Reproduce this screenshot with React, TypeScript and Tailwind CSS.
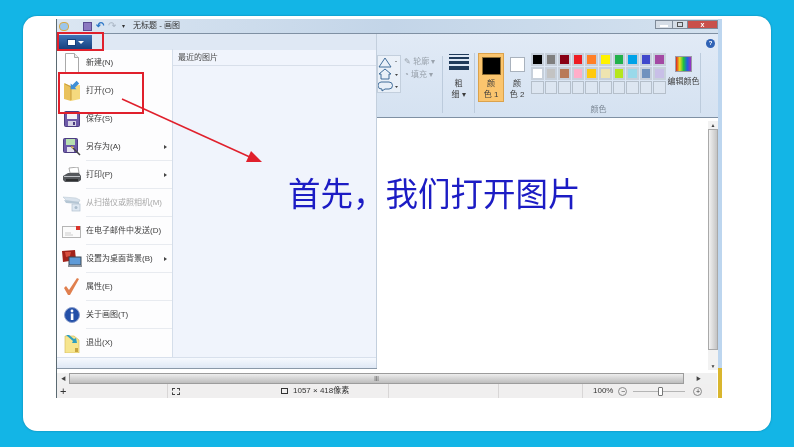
import type { ReactNode } from "react";

const FONT = "font-['Liberation_Sans','Noto_Sans_CJK_SC',sans-serif]";

const PALETTE = [
  "#000000", "#7f7f7f", "#880015", "#ed1c24", "#ff7f27", "#fff200", "#22b14c", "#00a2e8", "#3f48cc", "#a349a4",
  "#ffffff", "#c3c3c3", "#b97a57", "#ffaec9", "#ffc90e", "#efe4b0", "#b5e61d", "#99d9ea", "#7092be", "#c8bfe7",
];

function DocIcon() {
  return (
    <svg width="16" height="20" viewBox="0 0 16 20">
      <path d="M1.5 .5h9l4 4v15h-13z" fill="#fff" stroke="#a9a9a9" />
      <path d="M10.5 .5v4h4" fill="#eee" stroke="#a9a9a9" />
    </svg>
  );
}

function OpenIcon() {
  return (
    <svg width="18" height="22" viewBox="0 0 18 22">
      <path d="M1 3l7 3v15l-7-2z" fill="#e9c25c" />
      <path d="M8 6l9-1v14l-9 2z" fill="#f5d97e" />
      <path d="M2 4l6 3v13" fill="none" stroke="#c79c3a" />
      <path d="M16 1l-5 5-2-2v7h7l-2-2 5-5z" fill="#3f8fd6" transform="scale(.85)" />
    </svg>
  );
}

function SaveIcon() {
  return (
    <svg width="16" height="16" viewBox="0 0 16 16">
      <rect x=".5" y=".5" width="15" height="15" rx="1" fill="#6d5aa8" stroke="#4b3c80" />
      <rect x="3" y="1" width="10" height="7" fill="#f2f2f8" />
      <rect x="4" y="10" width="8" height="5" fill="#d5d3e4" />
      <rect x="9" y="11" width="2" height="3" fill="#4b3c80" />
    </svg>
  );
}

function SaveAsIcon() {
  return (
    <svg width="18" height="18" viewBox="0 0 18 18">
      <rect x=".5" y=".5" width="14" height="14" rx="1" fill="#6d5aa8" stroke="#4b3c80" />
      <rect x="3" y="1" width="9" height="6" fill="#b7e0b0" />
      <rect x="4" y="9" width="7" height="5" fill="#e4e2ef" />
      <path d="M8 8l9 9" stroke="#444" strokeWidth="1.5" />
      <path d="M8 8l3 1-2 2z" fill="#e6b35a" />
    </svg>
  );
}

function PrintIcon() {
  return (
    <svg width="20" height="16" viewBox="0 0 20 16">
      <path d="M7 1l9-1 1 6H8z" fill="#fff" stroke="#888" strokeWidth=".7" />
      <path d="M1 9l5-3h11l2 3v4l-3 2H3l-2-2z" fill="#55585c" />
      <path d="M2 9.5h16" stroke="#bfc2c6" />
      <path d="M4 13h12" stroke="#222" strokeWidth="1.5" />
    </svg>
  );
}

function ScanIcon() {
  return (
    <svg width="18" height="17" viewBox="0 0 18 17" opacity=".65">
      <path d="M0 2l13 1 4 2-1 2-12-1z" fill="#c7d6e4" stroke="#9aaebf" strokeWidth=".6" />
      <path d="M1 5l15 2v2L3 8z" fill="#8fa9bf" />
      <rect x="9" y="9" width="8" height="7" fill="#cfdeec" stroke="#8ba2b8" strokeWidth=".7" />
      <circle cx="13" cy="12.5" r="1.5" fill="#7f9ab2" />
    </svg>
  );
}

function MailIcon() {
  return (
    <svg width="20" height="13" viewBox="0 0 20 13">
      <rect x=".5" y="1.5" width="18" height="11" fill="#fbfbfb" stroke="#b5b5b5" />
      <path d="M3 8h6M3 10h8" stroke="#ccc" />
      <rect x="14" y="1" width="4" height="4" fill="#d9332b" />
    </svg>
  );
}

function DesktopIcon() {
  return (
    <svg width="20" height="18" viewBox="0 0 20 18">
      <path d="M0 1l13-1 1 10L1 12z" fill="#a3231b" />
      <path d="M3 2l6 0-1 4-4 1z" fill="#d8503f" />
      <rect x="7" y="7" width="12" height="8" fill="#5f9bd8" stroke="#3d4650" />
      <path d="M6 15h14v2H6z" fill="#8d9299" />
    </svg>
  );
}

function CheckIcon() {
  return (
    <svg width="17" height="18" viewBox="0 0 17 18">
      <path d="M1 10l2-2 3 4 8-12 2 1-9 16h-2z" fill="#e07f4e" />
    </svg>
  );
}

function InfoIcon() {
  return (
    <svg width="16" height="16" viewBox="0 0 16 16">
      <circle cx="8" cy="8" r="7.5" fill="#2450a8" stroke="#8c9fcc" />
      <circle cx="8" cy="4" r="1.4" fill="#fff" />
      <rect x="6.8" y="6.5" width="2.6" height="6.5" fill="#fff" />
    </svg>
  );
}

function ExitIcon() {
  return (
    <svg width="16" height="19" viewBox="0 0 16 19">
      <path d="M1 2h9l5 4v13H1z" fill="#f6e58e" stroke="#d8bd5f" strokeWidth=".7" />
      <path d="M2 1l7 6-1 2 5 0-1-5-2 1-5-4z" fill="#2f9fc0" />
      <rect x="11" y="14" width="3" height="4" fill="#c9a63f" />
    </svg>
  );
}

const MENU: { label: string; icon: ReactNode; more?: boolean; off?: boolean }[] = [
  { label: "新建(N)", icon: <DocIcon /> },
  { label: "打开(O)", icon: <OpenIcon /> },
  { label: "保存(S)", icon: <SaveIcon /> },
  { label: "另存为(A)", icon: <SaveAsIcon />, more: true },
  { label: "打印(P)", icon: <PrintIcon />, more: true },
  { label: "从扫描仪或照相机(M)", icon: <ScanIcon />, off: true },
  { label: "在电子邮件中发送(D)", icon: <MailIcon /> },
  { label: "设置为桌面背景(B)", icon: <DesktopIcon />, more: true },
  { label: "属性(E)", icon: <CheckIcon /> },
  { label: "关于画图(T)", icon: <InfoIcon /> },
  { label: "退出(X)", icon: <ExitIcon /> },
];

function AppMenu() {
  return (
    <div className="absolute left-[1px] top-[15px] flex h-[334px] w-[320px] flex-col border-r border-[#c3cfdd] bg-[#fdfdfe] shadow-[0_1px_0_#8a98a8]">
      <div className="flex h-[16px] items-start bg-[#dfe8f4]">
        <div className="ml-[1px] mt-[1px] flex h-[14px] w-[34px] items-center justify-center gap-[2px] bg-gradient-to-b from-[#3f74b8] to-[#16417f]">
          <span className="h-[7px] w-[9px] border border-[#16417f] bg-white" />
          <span className="border-x-[3px] border-t-[3px] border-x-transparent border-t-white" />
        </div>
      </div>
      <div className="flex min-h-0 flex-1">
        <div className="-mt-[1px] w-[116px] border-r border-[#d5deea]">
          {MENU.map((m, i) => (
            <div key={m.label} className="flex h-[28px] items-center">
              <div className="flex w-[29px] shrink-0 justify-center">{m.icon}</div>
              <div
                className={`flex h-full flex-1 items-center justify-between pr-[5px] text-[8px] ${
                  m.off ? "text-[#a8a8a8]" : "text-[#3c3c3c]"
                } ${i > 2 && i < 10 ? "border-b border-[#e8ebf0]" : ""}`}
              >
                <span className="whitespace-nowrap">{m.label}</span>
                {m.more && (
                  <span className="border-y-[2.5px] border-l-[3px] border-y-transparent border-l-[#444]" />
                )}
              </div>
            </div>
          ))}
        </div>
        <div className="flex-1 bg-[#f0f4fc]">
          <div className="flex h-[16px] items-center border-b border-[#d8dfea] pl-[5px] text-[8px] text-[#4a4a4a]">
            最近的图片
          </div>
        </div>
      </div>
      <div className="h-[11px] border-t border-[#d8e0ec] bg-gradient-to-b from-[#f6f9fe] to-[#dfe8f5]" />
    </div>
  );
}

function Ribbon() {
  return (
    <div className="relative flex h-[85px] border-y border-[#7f90a3] bg-gradient-to-b from-[#e1eaf6] to-[#d5e2f1] pl-[320px] pt-[19px]">
      <span className="absolute right-[3px] top-[5px] flex h-[9px] w-[9px] items-center justify-center rounded-full bg-[#2f62b5] text-[6px] font-bold text-white">
        ?
      </span>

      <div className="mt-[2px] flex h-[38px] w-[24px] flex-col border border-[#c3cfdd] bg-white/40">
        <svg width="22" height="36" viewBox="0 0 22 36" fill="none" stroke="#2f5f8f" strokeWidth=".9">
          <path d="M7 2l6 9H1z" />
          <path d="M7 13l6 5h-2v5H3v-5H1z" />
          <path d="M3 26h8a3 3 0 010 7H7l-3 2v-2a3 3 0 01-1-7z" />
          <path d="M18 5l1 1h-2zM17 18h3l-1.500 2zM17 30h3l-1.500 2z" fill="#444" stroke="none" />
        </svg>
      </div>

      <div className="ml-[3px] mt-[3px] flex h-[57px] w-[39px] flex-col gap-[2px] border-r border-[#bccbdc] pr-[4px] text-[8px] leading-[11px] text-[#9aa3ad]">
        <div className="whitespace-nowrap">✎ 轮廓 ▾</div>
        <div className="whitespace-nowrap">◔ 填充 ▾</div>
      </div>

      <div className="flex h-[60px] w-[32px] flex-col items-center border-r border-[#bccbdc] pt-[1px]">
        <div className="flex w-[20px] flex-col gap-[2px]">
          <span className="h-[1px] bg-[#1f3a5a]" />
          <span className="h-[2px] bg-[#1f3a5a]" />
          <span className="h-[3px] bg-[#1f3a5a]" />
          <span className="h-[4px] bg-[#1f3a5a]" />
        </div>
        <div className="mt-[8px] text-center text-[8px] leading-[11px] text-[#3c3c3c]">
          粗
          <br />
          细 ▾
        </div>
      </div>

      <div className="ml-[3px] flex h-[49px] w-[26px] flex-col items-center border border-[#dba24c] bg-[#fbc56e] pt-[3px]">
        <span className="h-[18px] w-[19px] border border-[#8a6a30] bg-black" />
        <div className="mt-[3px] text-center text-[8px] leading-[11px] text-[#3c3c3c]">
          颜
          <br />
          色 1
        </div>
      </div>

      <div className="ml-[4px] flex h-[49px] w-[18px] flex-col items-center pt-[4px]">
        <span className="h-[15px] w-[15px] border border-[#a9b2bd] bg-white" />
        <div className="mt-[6px] whitespace-nowrap text-center text-[8px] leading-[11px] text-[#3c3c3c]">
          颜
          <br />
          色 2
        </div>
      </div>

      <div className="ml-[5px] flex flex-col items-center">
        <div className="grid h-[41px] w-[135px] grid-cols-10 grid-rows-3 gap-[1px]">
          {PALETTE.map((c, i) => (
            <span key={i} className="border-[2px] border-[#c7d0db]" style={{ background: c }} />
          ))}
          {Array.from({ length: 10 }).map((_, i) => (
            <span key={i} className="border border-[#b5bfca] bg-[#dde6f1]" />
          ))}
        </div>
        <span className="mt-[10px] text-[8px] text-[#7b8794]">颜色</span>
      </div>

      <div className="ml-[1px] flex h-[60px] w-[34px] flex-col items-center border-r border-[#bccbdc] pt-[3px]">
        <span className="h-[16px] w-[17px] border border-[#9a9aa5] bg-[linear-gradient(90deg,#e02020,#e8e020,#20c040,#2060e0,#a030c0)]" />
        <span className="mt-[4px] whitespace-nowrap text-[8px] leading-[11px] text-[#3c3c3c]">编辑颜色</span>
      </div>
    </div>
  );
}

function TitleBar() {
  return (
    <div className="flex h-[14px] items-center bg-gradient-to-r from-[#dbe6f2] via-[#c3d5e8] to-[#d3e1ef]">
      <span className="ml-[2px] h-[9px] w-[10px] rounded-sm border border-[#d8a840] bg-[#9cc6ea]" />
      <span className="ml-[14px] h-[9px] w-[9px] border border-[#5a4a90] bg-[#8c78c0]" />
      <span className="ml-[4px] text-[10px] leading-none font-bold text-[#2f78c8]">↶</span>
      <span className="ml-[4px] text-[10px] leading-none text-[#aab6c4]">↷</span>
      <span className="ml-[6px] text-[6px] text-[#333]">▾</span>
      <span className="ml-[8px] whitespace-nowrap text-[8px] text-[#333]">无标题 - 画图</span>
      <div className="ml-auto mt-[-4px] flex h-[9px] items-stretch border border-[#7f8b99]">
        <span className="flex w-[16px] items-end justify-center bg-[#d5dde6] pb-[1px]">
          <span className="h-[2px] w-[8px] bg-white" />
        </span>
        <span className="flex w-[16px] items-center justify-center border-x border-[#7f8b99] bg-[#d5dde6]">
          <span className="h-[5px] w-[6px] border border-[#555]" />
        </span>
        <span className="flex w-[29px] items-center justify-center bg-[#c9504a] text-[7px] font-bold leading-none text-white">
          x
        </span>
      </div>
    </div>
  );
}

function Canvas() {
  return (
    <div className="flex min-h-0 flex-1 pt-[3px]">
      <div className="flex-1 bg-white" />
      <div className="flex w-[10px] flex-col items-center bg-[#f2f2f2] text-[5px] text-[#444]">
        <span className="h-[8px] leading-[8px]">▲</span>
        <div className="w-full flex-1 border border-[#a9a9a9] bg-gradient-to-r from-[#f2f2f2] to-[#c4c4c4]" />
        <span className="mt-[12px] h-[8px] leading-[8px]">▼</span>
      </div>
    </div>
  );
}

function HScroll() {
  return (
    <div className="mr-[1px] mt-[3px] flex h-[11px] items-center bg-[#f0f0f0] text-[5px] text-[#444]">
      <span className="w-[12px] pl-[4px]">◀</span>
      <div className="flex h-full w-[615px] items-center justify-center border border-[#9c9c9c] bg-gradient-to-b from-[#ededed] to-[#bdbdbd] text-[6px]">
        |||
      </div>
      <span className="flex-1 pr-[16px] text-right">▶</span>
    </div>
  );
}

function StatusBar() {
  return (
    <div className="mr-[1px] flex h-[14px] items-center bg-[#f0efef] text-[8px] text-[#333]">
      <div className="flex h-full w-[111px] items-center border-r border-[#d8d6d6] pl-[3px] text-[11px] leading-none">+</div>
      <div className="flex h-full w-[221px] items-center border-r border-[#d8d6d6] pl-[4px]">
        <span className="h-[7px] w-[8px] border border-dashed border-[#444]" />
        <span className="ml-[101px] h-[6px] w-[7px] border border-[#333]" />
        <span className="ml-[5px] whitespace-nowrap">1057 × 418像素</span>
      </div>
      <div className="h-full w-[110px] border-r border-[#d8d6d6]" />
      <div className="h-full w-[84px] border-r border-[#d8d6d6]" />
      <span className="ml-[10px]">100%</span>
      <span className="ml-[5px] flex h-[9px] w-[9px] items-center justify-center rounded-full border border-[#8a8a8a] text-[7px] leading-none">−</span>
      <div className="relative ml-[6px] flex h-[9px] w-[52px] items-center justify-center">
        <span className="h-[1px] w-full bg-[#b5b5b5]" />
        <span className="absolute ml-[2px] h-[9px] w-[5px] rounded-[1px] border border-[#777] bg-white" />
      </div>
      <span className="ml-[8px] flex h-[9px] w-[9px] items-center justify-center rounded-full border border-[#8a8a8a] text-[7px] leading-none">+</span>
    </div>
  );
}

export default function App() {
  return (
    <div className={`h-[447px] w-[794px] overflow-hidden bg-[#13b5e6] px-[23px] py-[16px] ${FONT}`}>
      <div className="h-[415px] rounded-[14px] bg-white pl-[33px] pr-[49px] pt-[3px] shadow-[0_0_2px_#0a7fa5]">
        <div className="relative flex h-[379px] w-[666px] blur-[0.3px]">
          <div className="flex min-w-0 flex-1 flex-col border-l border-[#5b6a72]">
            <TitleBar />
            <Ribbon />
            <Canvas />
            <HScroll />
            <StatusBar />
          </div>
          <div className="flex w-[4px] flex-col bg-[#bdd6ef]">
            <div className="flex-1" />
            <div className="h-[30px] bg-[#d9b62e]" />
          </div>
          <AppMenu />

          {/* slide caption and red callouts sit over the screenshot */}
          <span className="absolute left-[232px] top-[156px] whitespace-nowrap text-[32.5px] leading-[40px] text-[#1c1cc4]">
            首先，我们打开图片
          </span>
          <div className="absolute left-[1px] top-[13px] h-[19px] w-[47px] border-2 border-[#e0202c]" />
          <div className="absolute left-[2px] top-[53px] h-[42px] w-[86px] border-2 border-[#e0202c]" />
          <svg className="absolute left-0 top-0" width="300" height="200" viewBox="0 0 300 200">
            <path d="M66 80L196 139" stroke="#e0202c" strokeWidth="1.500" />
            <path d="M206 143L190 143L195 132z" fill="#e0202c" />
          </svg>
        </div>
      </div>
    </div>
  );
}
